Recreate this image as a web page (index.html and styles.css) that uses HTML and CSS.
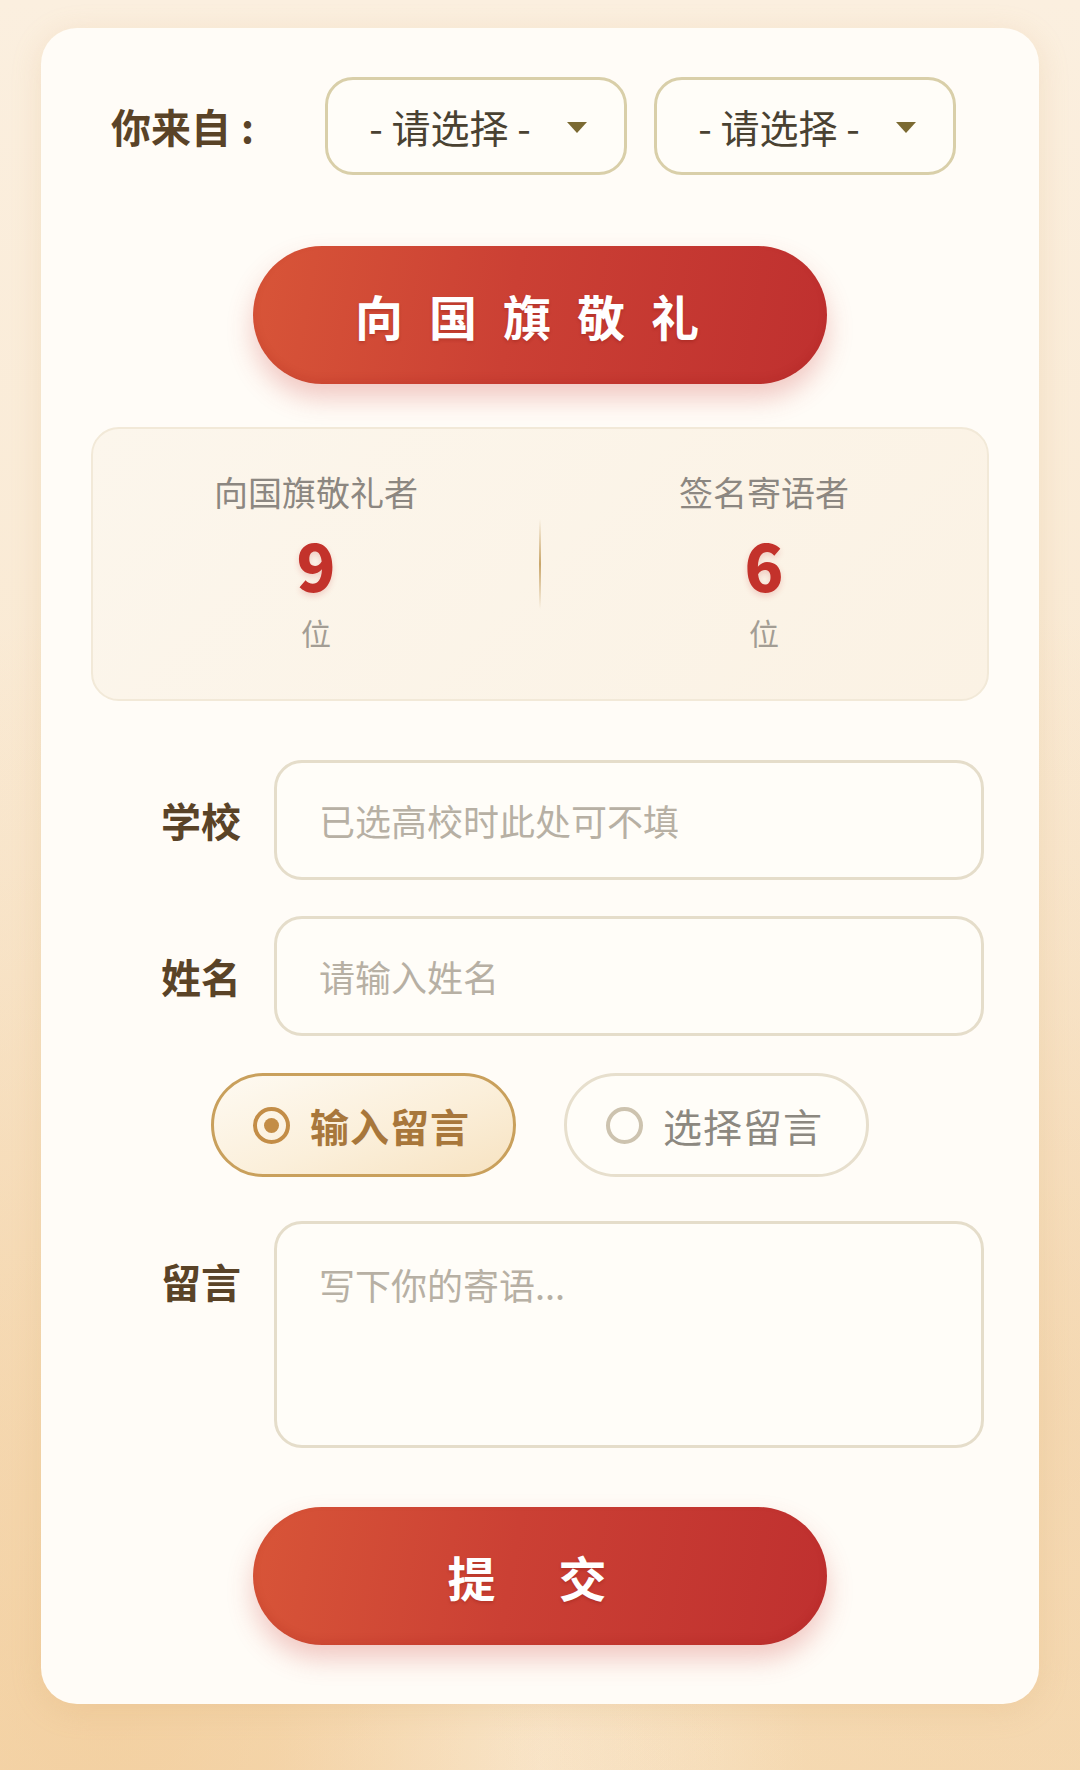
FILE: index.html
```html
<!DOCTYPE html>
<html lang="zh-CN">
<head>
<meta charset="utf-8">
<title>向国旗敬礼</title>
<link rel="stylesheet" href="styles.css">
</head>
<body>
<main class="card">
  <div class="from-row">
    <div class="from-label">你来自<span class="colon">:</span></div>
    <div class="select"><span>- 请选择 -</span><i class="caret"></i></div>
    <div class="select"><span>- 请选择 -</span><i class="caret"></i></div>
  </div>

  <button class="red-btn salute" type="button">向国旗敬礼</button>

  <section class="stats">
    <div class="stat">
      <div class="stat-label">向国旗敬礼者</div>
      <div class="stat-num">9</div>
      <div class="stat-unit">位</div>
    </div>
    <div class="stat-divider"></div>
    <div class="stat">
      <div class="stat-label">签名寄语者</div>
      <div class="stat-num">6</div>
      <div class="stat-unit">位</div>
    </div>
  </section>

  <form class="form">
    <div class="row">
      <label class="row-label">学校</label>
      <input class="field" type="text" placeholder="已选高校时此处可不填">
    </div>
    <div class="row gap-row">
      <label class="row-label">姓名</label>
      <input class="field" type="text" placeholder="请输入姓名">
    </div>
    <div class="radios">
      <div class="pill active"><span class="dot"></span><span class="pill-text">输入留言</span></div>
      <div class="pill"><span class="dot"></span><span class="pill-text">选择留言</span></div>
    </div>
    <div class="row msg-row">
      <label class="row-label top">留言</label>
      <textarea class="field area" placeholder="写下你的寄语..."></textarea>
    </div>
    <button class="red-btn submit" type="button">提 交</button>
  </form>
</main>
</body>
</html>
```

FILE: styles.css
```css
* { box-sizing: border-box; }

html, body {
  margin: 0;
  padding: 0;
}

body {
  width: 1080px;
  height: 1770px;
  overflow: hidden;
  font-family: "Noto Sans CJK SC", "Noto Sans", sans-serif;
  background:
    radial-gradient(ellipse at 10% 95%, rgba(240, 196, 140, 0.5), rgba(240, 196, 140, 0) 45%),
    radial-gradient(ellipse at 95% 80%, rgba(240, 200, 150, 0.4), rgba(240, 200, 150, 0) 40%),
    radial-gradient(ellipse at 50% 100%, rgba(252, 240, 222, 0.7), rgba(252, 240, 222, 0) 35%),
    linear-gradient(180deg, #fbefdf 0%, #f9e8d0 55%, #f6dcb6 100%);
}

.card {
  width: 998px;
  margin: 28px auto 0;
  padding: 49px 50px 59px;
  background: #fffcf7;
  border-radius: 36px;
  box-shadow: 0 6px 30px rgba(214, 170, 110, 0.22);
}

/* top row */
.from-row {
  display: flex;
  align-items: center;
  padding-left: 20px;
}

.from-label {
  width: 214px;
  font-size: 40px;
  font-weight: 700;
  color: #5a4327;
}

.colon {
  margin-left: 10px;
}

.select {
  width: 302px;
  height: 98px;
  border: 3px solid #d9cfa9;
  border-radius: 28px;
  background: #fffdf8;
  display: flex;
  align-items: center;
  justify-content: center;
  gap: 36px;
  font-size: 39px;
  color: #4a4232;
  padding-left: 4px;
}

.select + .select { margin-left: 27px; }

.caret {
  width: 0;
  height: 0;
  border-left: 10px solid transparent;
  border-right: 10px solid transparent;
  border-top: 11px solid #7b6a32;
  margin-top: 2px;
}

/* red buttons */
.red-btn {
  display: block;
  width: 574px;
  height: 138px;
  margin: 0 auto;
  border: none;
  border-radius: 69px;
  background: linear-gradient(100deg, #d85538 0%, #cb4034 45%, #bf302f 100%);
  box-shadow: 0 14px 26px rgba(205, 70, 60, 0.28), inset 0 -4px 8px rgba(140, 20, 20, 0.12);
  color: #fff;
  font-family: "Noto Sans CJK SC", "Noto Sans", sans-serif;
  font-size: 48px;
  font-weight: 700;
  letter-spacing: 26px;
  text-shadow: 0 2px 3px rgba(120, 20, 10, 0.25);
  padding: 0;
}

.salute { margin-top: 71px; }
.submit { margin-top: 59px; }

/* stats */
.stats {
  margin-top: 43px;
  height: 274px;
  border: 2px solid #f2e9d8;
  border-radius: 28px;
  background: linear-gradient(135deg, #fcf6ec 0%, #fbf2e4 100%);
  display: grid;
  grid-template-columns: 1fr 2px 1fr;
  align-items: center;
}

.stat {
  display: flex;
  flex-direction: column;
  align-items: center;
  padding-bottom: 8px;
}

.stat-label {
  font-size: 34px;
  line-height: 40px;
  color: #8c8781;
}

.stat-num {
  margin-top: 24px;
  font-size: 64px;
  line-height: 56px;
  font-weight: 900;
  color: #c3322b;
  text-shadow: 0 3px 6px rgba(195, 50, 43, 0.2);
}

.stat-unit {
  margin-top: 24px;
  font-size: 30px;
  line-height: 32px;
  color: #a39d94;
}

.stat-divider {
  width: 2px;
  height: 90px;
  background: linear-gradient(180deg, rgba(201, 169, 106, 0) 0%, #c9a66a 50%, rgba(201, 169, 106, 0) 100%);
}

/* form */
.form {
  margin-top: 59px;
}

.row {
  display: flex;
  align-items: center;
  gap: 33px;
  padding-right: 5px;
}

.gap-row { margin-top: 36px; }

.row-label {
  width: 150px;
  flex: none;
  text-align: right;
  font-size: 40px;
  font-weight: 700;
  color: #5a4327;
}

.field {
  flex: 1;
  height: 120px;
  border: 3px solid #e5ddca;
  border-radius: 28px;
  background: #fffdf8;
  padding: 0 0 0 42px;
  font-family: "Noto Sans CJK SC", "Noto Sans", sans-serif;
  font-size: 36px;
  color: #4a4232;
  outline: none;
}

.field::placeholder {
  color: #b7b0a4;
}

.radios {
  margin-top: 37px;
  display: flex;
  justify-content: center;
  gap: 48px;
}

.pill {
  width: 305px;
  height: 104px;
  border: 3px solid #e7dfcd;
  border-radius: 52px;
  background: #fffdf8;
  display: flex;
  align-items: center;
  justify-content: center;
  gap: 20px;
  padding-right: 4px;
}

.pill .dot {
  width: 37px;
  height: 37px;
  border-radius: 50%;
  border: 4px solid #cdc3af;
  position: relative;
  flex: none;
}

.pill-text {
  font-size: 39px;
  color: #8c8880;
  letter-spacing: 1px;
}

.pill.active {
  border-color: #c9a05c;
  background: linear-gradient(160deg, #fefaf2 0%, #fbefda 55%, #f7e3c2 100%);
}

.pill.active .dot {
  border-color: #c38d47;
}

.pill.active .dot::after {
  content: "";
  position: absolute;
  left: 50%;
  top: 50%;
  width: 15px;
  height: 15px;
  margin: -7.5px 0 0 -7.5px;
  border-radius: 50%;
  background: #c38d47;
}

.pill.active .pill-text {
  color: #a8773b;
  font-weight: 700;
}

.msg-row {
  margin-top: 44px;
  align-items: flex-start;
}

.row-label.top {
  padding-top: 35px;
  line-height: 50px;
}

.area {
  height: 227px;
  resize: none;
  padding-top: 35px;
  line-height: 50px;
}
```
